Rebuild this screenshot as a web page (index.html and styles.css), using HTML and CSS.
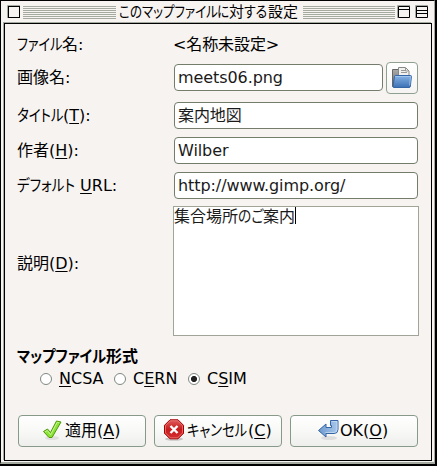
FILE: index.html
```html
<!DOCTYPE html>
<html lang="ja">
<head>
<meta charset="utf-8">
<title>このマップファイルに対する設定</title>
<link rel="stylesheet" href="styles.css">
</head>
<body>
<div class="window">
  <header class="titlebar">
    <svg class="wm" width="13" height="13"><path d="M.5 13V.5H13" stroke="#a4aaa0" fill="none"/><rect x="1.5" y="1.5" width="11" height="11" fill="#f7f3f1" stroke="#000"/></svg>
    <div class="stripes"></div>
    <h1 class="title"><span class="kana k-title">このマップファイル</span><span class="kana k-ni">に</span>対<span class="kana k-suru">する</span>設定</h1>
    <div class="stripes right"></div>
    <svg class="wm max" width="13" height="13"><path d="M.5 13V.5H13" stroke="#a4aaa0" fill="none"/><path d="M1.5 1.5h11v11h-11zM1 4.5h12" fill="none" stroke="#000"/></svg>
    <svg class="wm shade" width="13" height="13"><path d="M.5 13V.5H13" stroke="#a4aaa0" fill="none"/><path d="M1.5 1.5h11v11h-11zM1 5.5h12M1 8.5h12" fill="none" stroke="#000"/></svg>
  </header>
  <main class="content">
    <div class="row first"><span class="label"><span class="kana k-file">ファイル</span>名:</span><span>&lt;名称未設定&gt;</span></div>
    <div class="row image"><span class="label">画像名:</span><div class="entry">meets06.png</div>
      <div class="browse"><svg width="22" height="22" viewBox="0 0 22 22">
        <defs><linearGradient id="fo" x2="0" y2="1"><stop stop-color="#87b4e6"/><stop offset="1" stop-color="#3c70b4"/></linearGradient><linearGradient id="gr" x2="0" y2="1"><stop stop-color="#aaa"/><stop offset="1" stop-color="#666"/></linearGradient></defs>
        <path d="M1.500 19.500V2.500H8l1 2h8v15z" fill="url(#gr)" stroke="#666"/>
        <path d="M7.500 12V.5H14.500l3.500 3.500v8z" fill="#f1f1f0" stroke="#888"/><path d="M10 3.500h4M10 5.500h6M14.500 1v3h3" stroke="#999" fill="none"/>
        <path d="M3.500 9.500q.1-1 1-1h15q1 0 .9 1l-1 9.500q-.1 1.500-1.400 1.500H3q-1.200 0-1-1.200z" fill="url(#fo)" stroke="#3465a4"/><path d="M4.500 9.500h15l-.9 9" stroke="#abcdf4" fill="none" opacity=".7"/></svg></div></div>
    <div class="row mid"><span class="label"><span class="kana k-name">タイトル</span>(<u>T</u>):</span><div class="entry">案内地図</div></div>
    <div class="row"><span class="label">作者(<u>H</u>):</span><div class="entry">Wilber</div></div>
    <div class="row"><span class="label"><span class="kana k-def">デフォルト</span> <u>U</u>RL:</span><div class="entry">http://www.gimp.org/</div></div>
    <div class="row desc"><span class="label">説明(<u>D</u>):</span><div class="area"><span>集合場所<span class="kana k-nogo">のご</span>案内</span><i class="caret"></i></div></div>
    <h2 class="heading"><span class="kana k-head">マップファイル</span>形式</h2>
    <div class="radios">
      <span class="option"><i class="radio"></i><span><u>N</u>CSA</span></span>
      <span class="option"><i class="radio"></i><span>C<u>E</u>RN</span></span>
      <span class="option"><i class="radio on"></i><span>C<u>S</u>IM</span></span>
    </div>
    <div class="actions">
      <div class="button apply"><svg width="22" height="22" viewBox="0 0 22 22"><ellipse cx="10" cy="19" rx="7" ry="2" fill="#e2e0df"/><path d="M1.500 12.500l4-2.500 3 3.500L14.500 2l4.500 1L10 18.500H7z" fill="#8ae234" stroke="#4e9a06" stroke-linejoin="round"/><path d="M3 13l2.300-1.500 3.300 4.200L15.200 3.300l2 .5" fill="none" stroke="#c5f59a"/></svg><span>適用(<u>A</u>)</span></div>
      <div class="button cancel"><svg width="22" height="22" viewBox="0 0 22 22"><defs><linearGradient id="re" x2="0" y2="1"><stop stop-color="#df5b5b"/><stop offset=".5" stop-color="#c51d1d"/><stop offset="1" stop-color="#d83030"/></linearGradient></defs><ellipse cx="11" cy="20" rx="9" ry="1.800" fill="#c9c6c5"/><path d="M7 .8h8l5.500 5.500v8L15 19.800H7L1.500 14.300v-8z" fill="url(#re)" stroke="#a40000"/><path d="M7.400 1.800h7.200l4.900 4.900v7.200l-4.900 4.900H7.400l-4.900-4.900V6.700z" fill="none" stroke="#ed8585" opacity=".7"/><path d="M7.500 7l7 7M14.500 7l-7 7" stroke="#fff" stroke-width="2.400"/></svg><span><span class="kana k-can">キャンセル</span>(<u>C</u>)</span></div>
      <div class="button ok"><svg width="22" height="22" viewBox="0 0 22 22"><defs><linearGradient id="bl"><stop stop-color="#6d9ad0"/><stop offset="1" stop-color="#a9c8ea"/></linearGradient></defs><ellipse cx="12" cy="19" rx="8" ry="2" fill="#ddd"/><path d="M1.500 11.500l7.500-6.500v3.500h5.500V6.500h-1v-5h7.500v9q0 4-4 4H9V18z" fill="url(#bl)" stroke="#3465a4" stroke-linejoin="round"/><path d="M14.500 2.500h5.500v8q0 3-3 3H8.500" fill="none" stroke="#dbe9f8" opacity=".6"/></svg><span>OK(<u>O</u>)</span></div>
    </div>
  </main>
</div>
</body>
</html>
```
FILE: styles.css
```css
* { box-sizing: border-box; }
body { margin: 0; background: #000; color: #000; font: 16px/20px "DejaVu Sans", "Noto Sans CJK JP", sans-serif; white-space: nowrap; }
.window { width: 435px; height: 464px; background: #f7f3f1; border: 1px solid #000; border-right: 1px solid #a4aaa0; border-bottom: 2px solid #a4aaa0; padding: 0 2px 1px; display: flex; flex-direction: column; }
.titlebar { height: 21px; flex: none; display: flex; padding: 4px 3px 0 4px; }
.wm { flex: none; }
.stripes { flex: none; width: 93px; height: 13px; margin: 1px 0 0 3px; background: repeating-linear-gradient(#a4aaa0 0 1px, #f7f3f1 1px 2px); }
.title { flex: none; width: 187px; margin: -3px 0 0; padding-left: 3px; font-size: 15px; line-height: 20px; font-weight: 400; }
.stripes.right { width: 92px; margin-left: 0; }
.max { margin-left: 2px; }
.shade { margin-left: 5px; }
.content { flex: 1; border: 1px solid #000; box-shadow: -1px -1px #a4aaa0; margin: 1px 0 0 1px; padding: 11px 13px 0 12px; }
.row { display: flex; align-items: center; height: 28px; margin-bottom: 7px; }
.label { width: 157px; flex: none; }
.row.first { height: 20px; margin-bottom: 7px; }
.row.first > span:last-child { margin-left: -1px; letter-spacing: -0.1px; }
.row.image { height: 32px; margin-bottom: 8px; }
.entry { flex: 1; height: 27px; margin-bottom: 2px; border: 1px solid #747d6c; border-radius: 4px; background: #fff; padding: 3px; color: #1a1a1a; letter-spacing: -0.08px; }
.browse { width: 32px; height: 32px; margin-left: 3px; padding: 4px 0 0 4px; border: 1px solid #8fa090; border-radius: 4px; background: linear-gradient(#fff, #f5f4f2); }
.row.desc { height: 130px; margin-top: -1px; margin-bottom: 11px; }
.desc .label { width: 156px; margin-top: -14px; }
.area { flex: none; width: 246px; height: 130px; border: 1px solid #a0a598; background: #fff; color: #1a1a1a; display: flex; }
.caret { width: 1px; height: 17px; background: #000; }
u { text-decoration: underline; text-decoration-thickness: 1px; text-underline-offset: 2px; text-decoration-skip-ink: none; }
.heading { margin: 0; font-size: 16px; line-height: 20px; }
.radios { display: flex; padding-left: 23px; margin-top: 2px; height: 20px; }
.option { display: flex; align-items: center; width: 74px; }
.radio { width: 12px; height: 12px; border: 1px solid #7e8880; border-radius: 50%; background: #fff; margin-right: 7px; flex: none; }
.radio.on { background: radial-gradient(circle, #222 0 2.700px, #fff 3.400px); }
.actions { display: flex; gap: 8px; margin: 26px 0 0 1px; }
.button { flex: none; width: 128px; height: 32px; display: flex; align-items: center; border: 1px solid #879a89; border-radius: 4px; background: linear-gradient(#fff, #f8f8f6 50%, #eeeeec); }
.button svg { margin-top: -2px; flex: none; }
.apply { padding-left: 23px; }
.apply svg { margin-right: 1px; }
.cancel { padding-left: 8px; }
.cancel svg { margin-right: 2px; }
.ok { padding-left: 26px; }
.ok svg { margin-right: 1px; }

/* Narrow proportional kana set beside full-width kanji. */
.kana { display: inline-block; transform-origin: 0 50%; font-feature-settings: "palt"; }
.k-title { width: 98px; transform: scaleX(.835); }
.k-ni { width: 12px; transform: scaleX(.83); }
.k-suru { width: 24px; transform: scaleX(.86); }
.k-file { width: 45px; transform: scaleX(.82); }
.k-name { width: 46px; transform: scaleX(.84); }
.k-def { width: 58px; transform: scaleX(.85); }
.k-nogo { width: 25px; transform: scaleX(.86); }
.k-head { width: 89px; transform: scaleX(.89); }
.k-can { width: 61px; transform: scaleX(.83); }
```
